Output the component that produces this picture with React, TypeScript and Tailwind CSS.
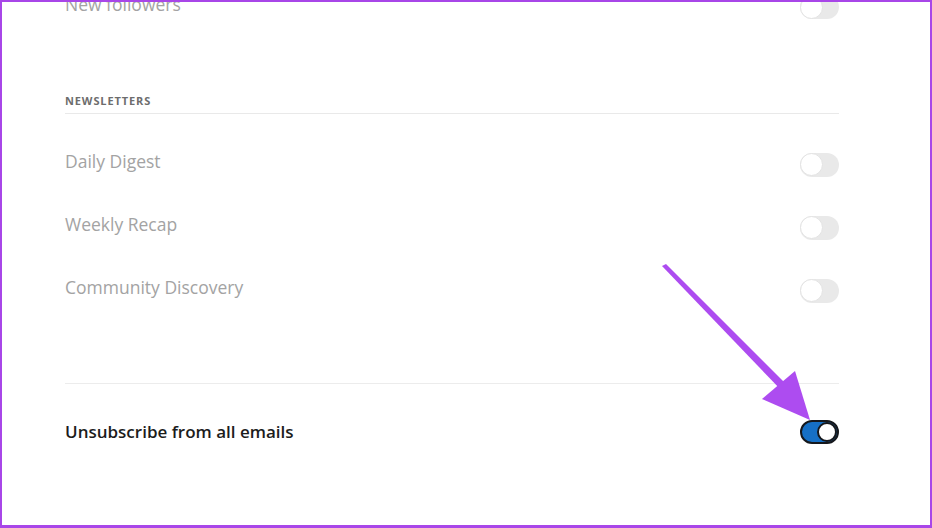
import React from 'react';

interface ToggleProps {
  on?: boolean;
}

function Toggle({ on = false }: ToggleProps) {
  if (on) {
    return (
      <div className="flex h-[24px] w-[39px] shrink-0 items-center justify-end rounded-full border-2 border-[#16181c] bg-[#1670c6]">
        <div className="h-[20px] w-[20px] rounded-full border-2 border-[#16181c] bg-white" />
      </div>
    );
  }
  return (
    <div className="flex h-[24px] w-[39px] shrink-0 items-center rounded-full bg-[#e9e9e9]">
      <div className="h-[23px] w-[23px] rounded-full border border-[#e3e3e3] bg-white" />
    </div>
  );
}

function Row({ label, h = 'h-[63px]' }: { label: string; h?: string }) {
  return (
    <div className={`flex items-center justify-between ${h}`}>
      <span className="pb-[6px] text-[17.5px] text-[#a3a3a3]">{label}</span>
      <Toggle />
    </div>
  );
}

function Arrow() {
  return (
    <svg className="pointer-events-none absolute left-0 top-0" width="932" height="528" viewBox="0 0 932 528">
      {/* tapered shaft */}
      <polygon points="660,264 664,262 787,385 781,390" fill="#ad4cf0" />
      {/* head */}
      <polygon points="760,397 793,369 808,418" fill="#ad4cf0" />
    </svg>
  );
}

export default function App() {
  return (
    <div
      className="relative h-[528px] w-[932px] overflow-hidden border-2 border-b-[3px] border-[#a846e8] bg-white"
      style={{ fontFamily: '"Open Sans", "Noto Sans", sans-serif' }}
    >
      <div className="ml-[63px] mr-[91px] mt-[-19px]">
        <Row label="New followers" h="h-[48px]" />

        <div className="mt-[62px] border-b border-[#e9e9e9] pb-[4px]">
          <span className="block text-[11px] font-bold leading-[16px] tracking-[0.08em] text-[#6d6d6d]">
            NEWSLETTERS
          </span>
        </div>

        <div className="mt-[19px]">
          <Row label="Daily Digest" />
          <Row label="Weekly Recap" />
          <Row label="Community Discovery" />
        </div>

        <div className="mt-[61px] border-t border-[#ececec]" />

        <div className="mt-[24px] flex h-[48px] items-center justify-between">
          <span className="text-[17px] font-semibold text-[#1c1c1c]">Unsubscribe from all emails</span>
          <Toggle on />
        </div>
      </div>
      <Arrow />
    </div>
  );
}
